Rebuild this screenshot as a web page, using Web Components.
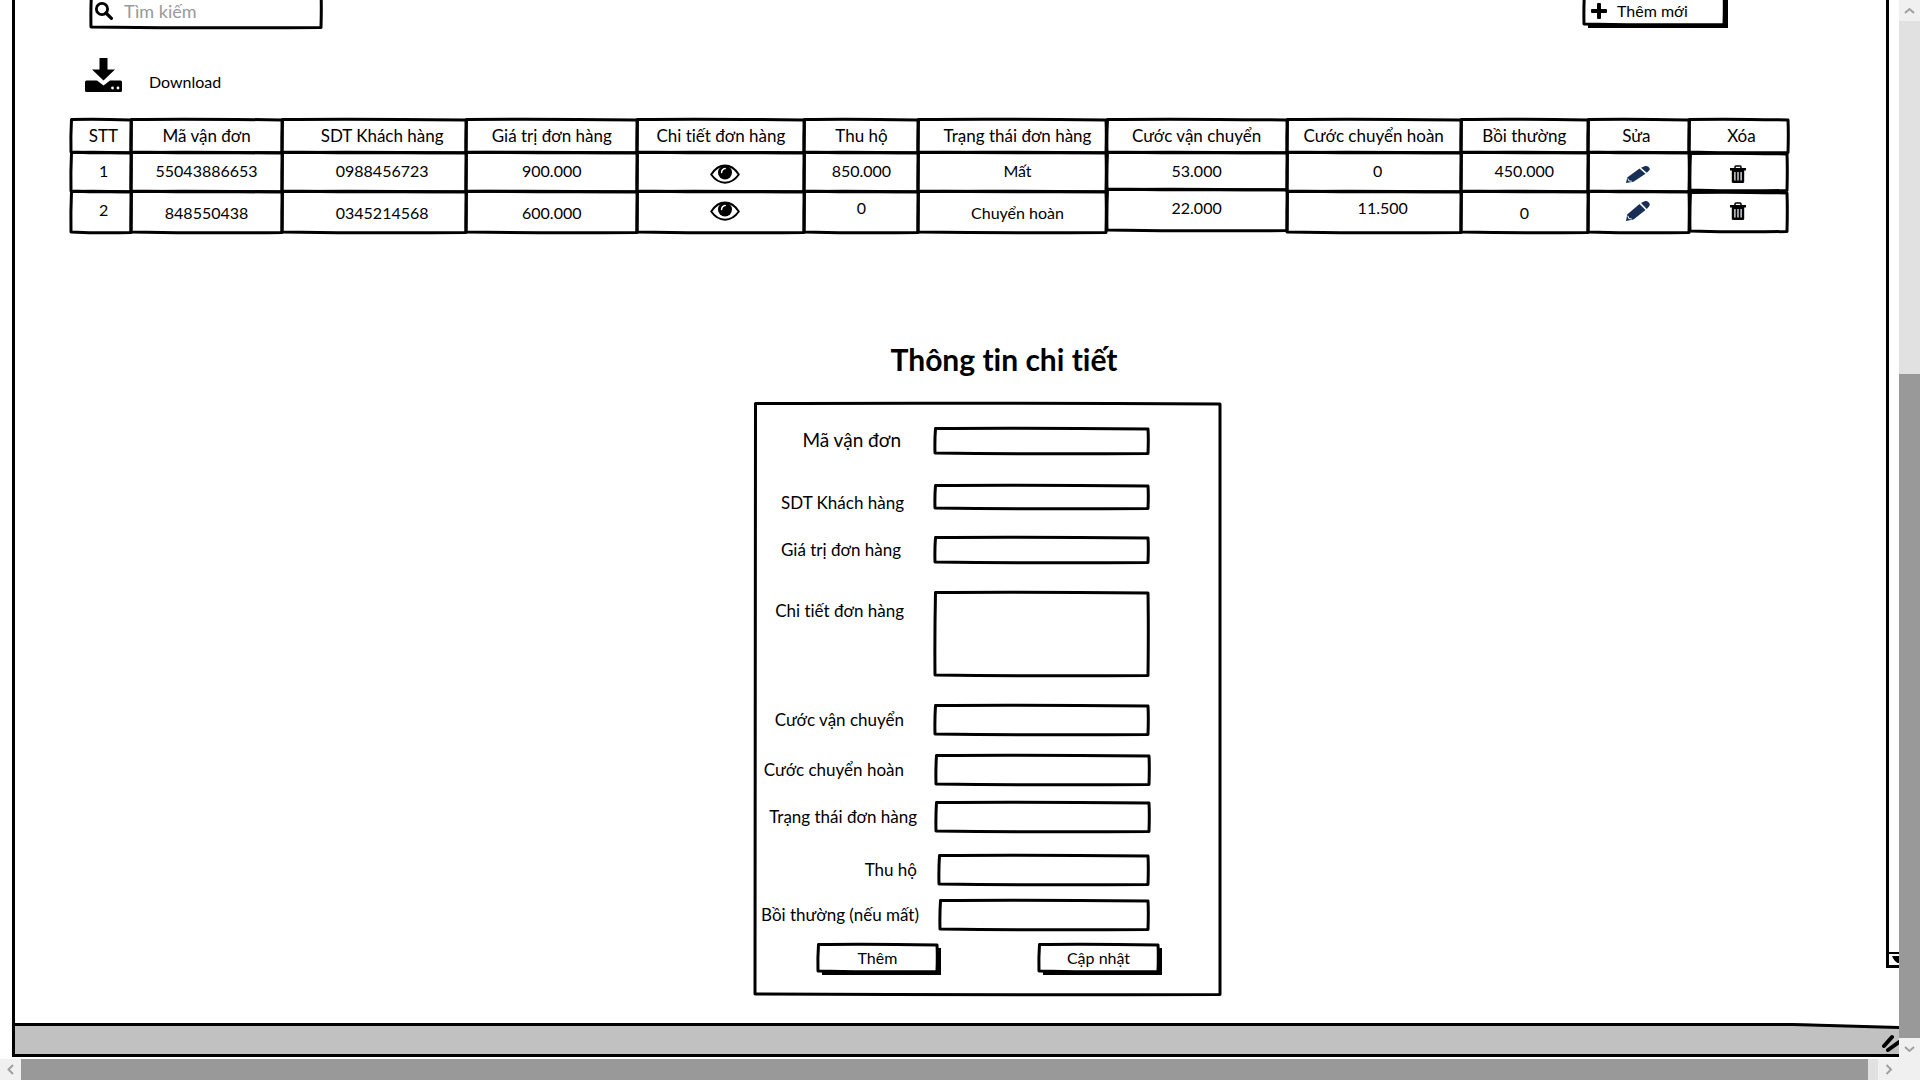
<!DOCTYPE html>
<html lang="vi">
<head>
<meta charset="utf-8">
<title>Quản lý vận đơn</title>
<style>
  html, body { margin: 0; height: 100%; overflow: hidden; background: #fff; }
  body { font-family: Lato, "Noto Sans", sans-serif; font-size: 16px; line-height: 20px; font-variant-ligatures: none; color: #000; }
</style>
</head>
<body>
<order-app></order-app>

<script>
/* Hand-drawn outline that fills its positioned parent. */
customElements.define('sketch-frame', class extends HTMLElement {
  constructor() {
    super();
    this.attachShadow({ mode: 'open' }).innerHTML = `
      <style>
        :host { position: absolute; inset: 0; display: block; pointer-events: none; }
        svg { display: block; width: 100%; height: 100%; overflow: visible; }
        path { fill: none; stroke: #000; stroke-width: 3; stroke-linejoin: round; stroke-linecap: round; }
      </style>
      <svg aria-hidden="true"><path/></svg>`;
  }
  connectedCallback() {
    this.observer = new ResizeObserver(() => this.draw());
    this.observer.observe(this);
    this.draw();
  }
  disconnectedCallback() { this.observer.disconnect(); }
  draw() {
    const w = this.clientWidth, h = this.clientHeight;
    this.shadowRoot.querySelector('path').setAttribute('d',
      `M.5 .5 Q${w * .4} -.4 ${w} 1 Q${w + .6} ${h * .4} ${w} ${h + .5}` +
      ` Q${w * .5} ${h + 1.4} 0 ${h} Q-.4 ${h * .5} .5 .5Z`);
  }
});

const ICONS = {
  search: ['0 0 18 18', '<circle cx="7" cy="7" r="5.6" fill="none" stroke="currentColor" stroke-width="2.8"/><path d="M11 11l5.4 5.4" stroke="currentColor" stroke-width="3.2" stroke-linecap="round"/>'],
  plus: ['0 0 16 16', '<path d="M6 1q0-1 1-1h2q1 0 1 1v5h5q1 0 1 1v2q0 1-1 1h-5v5q0 1-1 1H7q-1 0-1-1v-5H1q-1 0-1-1V7q0-1 1-1h5z" fill="currentColor"/>'],
  download: ['0 0 37 34', '<path d="M14.500 0h8v11.500h7.500L18.500 22.500 7 11.500h7.500z" fill="currentColor"/><path d="M1.500 22.500h10.500l6.500 5 6.500-5h10.500q1.500 0 1.500 1.500v8.500q0 1.500-1.500 1.500h-34Q0 34 0 32.500V24q0-1.500 1.500-1.500z" fill="currentColor"/><circle cx="27.500" cy="30" r="1.400" fill="#fff"/><circle cx="33" cy="30" r="1.400" fill="#fff"/>'],
  eye: ['0 0 30 20', '<path d="M1.200 10.500Q7 1.500 15 1.500t13.800 9Q23 18.700 15 18.700T1.200 10.500z" fill="#fff" stroke="currentColor" stroke-width="2" stroke-linejoin="round"/><circle cx="15" cy="8.500" r="7" fill="currentColor"/><path d="M11.600 8.500q.2-3.500 3.600-4" fill="none" stroke="#fff" stroke-width="1.500" stroke-linecap="round"/>'],
  pencil: ['0 0 24 20', '<path d="M0 20l1.200-6.500L13.500 3l6 6L7.500 18.500z" fill="#172f55"/><path d="M15 2l3.500-1.800q2-.6 3.500.5l1.200 1.300q1.200 1.600-.1 3.300l-2.300 2.700z" fill="#172f55"/><path d="M1.800 14.800l1 2.700 3 .5" fill="none" stroke="#fff" stroke-width="1"/>'],
  trash: ['0 0 16 18', '<path d="M5 3.500V2q0-1 1-1h4q1 0 1 1v1.500" fill="none" stroke="currentColor" stroke-width="1.500"/><path d="M0 3h16v2.500H0z" fill="currentColor"/><path d="M1.800 5h12.400v11.500q0 1.500-1.500 1.500H3.300q-1.500 0-1.500-1.500z" fill="currentColor"/><path d="M4.900 7v8.500M8 7v8.500M11.100 7v8.500" stroke="#e8eef5" stroke-width="1.300"/>'],
};

/* <ui-icon name="..."> sized by --w and --h */
customElements.define('ui-icon', class extends HTMLElement {
  connectedCallback() {
    const [box, art] = ICONS[this.getAttribute('name')];
    const [, , w, h] = box.split(' ');
    if (!this.shadowRoot) this.attachShadow({ mode: 'open' });
    this.shadowRoot.innerHTML = `
      <style>:host { display: block; flex: none; width: var(--w, ${w}px); height: var(--h, ${h}px); } svg { display: block; width: 100%; height: 100%; }</style>
      <svg viewBox="${box}" preserveAspectRatio="none" aria-hidden="true">${art}</svg>`;
  }
});

/* Raised button with a thick drop edge */
customElements.define('sketch-button', class extends HTMLElement {
  constructor() {
    super();
    this.attachShadow({ mode: 'open' }).innerHTML = `
      <style>
        :host { display: block; width: 119px; height: 27px; }
        button { position: relative; display: flex; align-items: center; justify-content: var(--justify, center); gap: 10px;
          width: 100%; height: 100%; padding: var(--pad, 0); border: 0; background: #fff; box-shadow: 4px 4px 0 #000;
          font: inherit; font-variant-ligatures: none; color: inherit; }
      </style>
      <button type="button"><sketch-frame></sketch-frame><slot></slot></button>`;
  }
});

customElements.define('search-box', class extends HTMLElement {
  constructor() {
    super();
    this.attachShadow({ mode: 'open' }).innerHTML = `
      <style>
        :host { position: relative; display: flex; align-items: center; gap: 11px; width: 230px; height: 100%; padding: 2px 4px 0; box-sizing: border-box; }
        input { flex: 1; min-width: 0; padding: 0; border: 0; background: none; outline: 0; font: inherit; font-size: 18px; line-height: 24px; }
        input::placeholder { color: #999; opacity: 1; }
      </style>
      <sketch-frame></sketch-frame>
      <ui-icon name="search"></ui-icon>
      <input type="search" placeholder="Tìm kiếm" aria-label="Tìm kiếm">`;
  }
});

customElements.define('order-table', class extends HTMLElement {
  constructor() {
    super();
    const cols = [60, 151, 184, 171, 167, 114, 188, 180, 174, 127, 101, 99];
    const heads = ['STT', 'Mã vận đơn', 'SDT Khách hàng', 'Giá trị đơn hàng', 'Chi tiết đơn hàng', 'Thu hộ',
      'Trạng thái đơn hàng', 'Cước vận chuyển', 'Cước chuyển hoàn', 'Bồi thường', 'Sửa', 'Xóa'];
    const rows = [
      ['1', '55043886653', '0988456723', '900.000', '@eye', '850.000', 'Mất', '53.000', '0', '450.000', '@pencil', '@trash'],
      ['2', '848550438', '0345214568', '600.000', '@eye', '0', 'Chuyển hoàn', '22.000', '11.500', '0', '@pencil', '@trash'],
    ];
    const labels = { eye: 'Xem chi tiết', pencil: 'Sửa', trash: 'Xóa' };
    const high = [5, 7, 8];
    const cell = (v, r, c) => {
      const body = v[0] === '@'
        ? `<button type="button" aria-label="${labels[v.slice(1)]}"><ui-icon name="${v.slice(1)}"></ui-icon></button>` : v;
      const cls = ['c' + c, v[0] === '@' ? 'icon' : (r === 1 && c > 0 ? (high.includes(c) ? 'high' : 'low') : '')].join(' ');
      return `<td class="${cls}"><sketch-frame></sketch-frame>${body}</td>`;
    };
    this.attachShadow({ mode: 'open' }).innerHTML = `
      <style>
        :host { display: block; }
        table { width: 100%; table-layout: fixed; border-collapse: separate; border-spacing: 0; }
        th, td { position: relative; box-sizing: border-box; padding: 0; font-weight: 400; text-align: center; vertical-align: top; white-space: nowrap; }
        th { height: 33px; padding-top: 7px; font-size: 17px; }
        td { padding-top: 9px; }
        .first td { height: 39px; }
        .second td { height: 41px; }
        td.high { padding-top: 7px; }
        td.low { padding-top: 12px; }
        td.icon { padding-top: 12px; }
        .second td.icon { padding-top: 10px; }
        .c0 { padding-left: 5px; }
        .c2 { padding-left: 16px; }
        .c6 { padding-left: 10px; }
        td.c4, td.c8 { padding-left: 8px; }
        .second td.c8 { padding-left: 18px; }
        th.c10 { padding-right: 4px; }
        th.c11 { padding-left: 6px; }
        td.c7 sketch-frame { top: -2px; bottom: 2px; }
        .first td.c7 sketch-frame { top: 0; }
        td.c11 sketch-frame { inset: 1px; }
        button { display: flex; align-items: center; justify-content: center; width: 32px; height: 20px; margin: 0 auto; padding: 0; border: 0; background: none; color: inherit; }
        .first .c10 { --h: 17px; }
      </style>
      <table>
        <colgroup>${cols.map(w => `<col style="width:${w}px">`).join('')}</colgroup>
        <thead><tr>${heads.map((h, i) => `<th scope="col" class="c${i}"><sketch-frame></sketch-frame>${h}</th>`).join('')}</tr></thead>
        <tbody>${rows.map((row, r) => `<tr class="${r ? 'second' : 'first'}">${row.map((v, c) => cell(v, r, c)).join('')}</tr>`).join('')}</tbody>
      </table>`;
  }
});

/* Labelled text box; attribute "multiline" gives a text area */
customElements.define('form-field', class extends HTMLElement {
  connectedCallback() {
    const multi = this.hasAttribute('multiline');
    if (!this.shadowRoot) this.attachShadow({ mode: 'open' });
    this.shadowRoot.innerHTML = `
      <style>
        :host { display: flex; align-items: center; height: var(--row, 29px); margin-bottom: var(--after, 20px); }
        label { flex: none; box-sizing: border-box; width: 180px; padding-right: var(--gap, 31px); text-align: right; white-space: nowrap; font-size: 17px; }
        :host([large]) label { padding-bottom: 2px; font-size: 19px; line-height: 24px; }
        :host([drop]) label { padding-top: 12px; }
        :host([multiline]) label { align-self: flex-start; padding-top: 9px; }
        .box { position: relative; flex: 1; height: 100%; margin-left: var(--in, 0px); margin-right: var(--out, 0px); }
        input, textarea { display: block; box-sizing: border-box; width: 100%; height: 100%; padding: 2px 6px; border: 0; outline: 0; background: none; resize: none; font: inherit; }
      </style>
      <label for="f">${this.getAttribute('label')}</label>
      <div class="box"><sketch-frame></sketch-frame>${multi ? '<textarea id="f"></textarea>' : '<input id="f" type="text">'}</div>`;
  }
});

customElements.define('detail-form', class extends HTMLElement {
  constructor() {
    super();
    this.attachShadow({ mode: 'open' }).innerHTML = `
      <style>
        :host { display: block; width: 465px; }
        h2 { margin: 0; padding-left: 33px; text-align: center; font-size: 30px; line-height: 40px; font-weight: 700; }
        form { position: relative; box-sizing: border-box; margin-top: 24px; padding: 25px 72px 23px 0; }
        .actions { display: flex; justify-content: space-between; margin: 0 -10px 0 63px; }
      </style>
      <h2>Thông tin chi tiết</h2>
      <form>
        <sketch-frame></sketch-frame>
        <form-field large label="Mã vận đơn" style="--row:25px;--after:32px;--gap:34px"></form-field>
        <form-field drop label="SDT Khách hàng" style="--row:23px;--after:29px"></form-field>
        <form-field label="Giá trị đơn hàng" style="--row:25px;--after:30px;--gap:34px"></form-field>
        <form-field multiline label="Chi tiết đơn hàng" style="--row:83px;--after:30px"></form-field>
        <form-field label="Cước vận chuyển" style="--after:21px"></form-field>
        <form-field label="Cước chuyển hoàn" style="--after:18px;--in:1px;--out:-1px"></form-field>
        <form-field label="Trạng thái đơn hàng" style="--after:24px;--gap:18px;--in:1px;--out:-1px"></form-field>
        <form-field label="Thu hộ" style="--after:16px;--gap:18px;--in:4px"></form-field>
        <form-field label="Bồi thường (nếu mất)" style="--after:15px;--gap:16px;--in:5px"></form-field>
        <div class="actions"><sketch-button>Thêm</sketch-button><sketch-button>Cập nhật</sketch-button></div>
      </form>`;
  }
});

customElements.define('scroll-bar', class extends HTMLElement {
  connectedCallback() {
    const v = this.hasAttribute('vertical');
    const arrow = d => `<svg viewBox="0 0 21 21" width="21" height="21" aria-hidden="true"><path d="${d}" fill="none" stroke="#a0a0a0" stroke-width="2"/></svg>`;
    if (!this.shadowRoot) this.attachShadow({ mode: 'open' });
    this.shadowRoot.innerHTML = `
      <style>
        :host { display: flex; flex-direction: ${v ? 'column' : 'row'}; background: #e1e1e1; }
        svg { display: block; flex: none; background: #f0f0f0; }
        .lead { flex: var(--lead, 0) 0 0; }
        .thumb { flex: var(--thumb, 1) 0 0; background: #999; }
        .tail { flex: var(--tail, 0) 0 0; }
      </style>
      ${arrow(v ? 'M6 13l4.500-4 4.500 4' : 'M13 6L8.500 10.500l4.500 4.500')}
      <div class="lead"></div><div class="thumb"></div><div class="tail"></div>
      ${arrow(v ? 'M6 9l4.500 4 4.500-4' : 'M8.500 6l4.500 4.500-4.500 4.500')}`;
  }
});

customElements.define('order-app', class extends HTMLElement {
  constructor() {
    super();
    this.attachShadow({ mode: 'open' }).innerHTML = `
      <style>
        :host { display: grid; grid-template: minmax(0, 1fr) 21px / minmax(0, 1fr) 21px; height: 100%; }
        .view { display: flex; overflow: hidden; padding: 0 0 2px 12px; }
        .window { flex: 1; min-width: 0; display: flex; flex-direction: column; border-left: 3px solid #000; }
        .content { flex: 1; min-height: 0; display: flex; }
        main { flex: 1; min-width: 0; }
        .tools { display: flex; justify-content: space-between; height: 35px; margin: -8px 162px 0 76px; }
        .tools sketch-button { width: 140px; height: 32px; --justify: flex-start; --pad: 6px 0 0 7px; }
        .download { display: flex; align-items: flex-end; gap: 27px; width: max-content; margin: 31px 0 27px 70px; padding: 0; border: 0; background: none; font: inherit; color: inherit; }
        order-table { margin: 0 98px 0 56px; }
        detail-form { margin: 107px auto 0; }
        .detail { padding-left: 74px; }
        .track { flex: none; width: 10px; height: 965px; border: solid #000; border-width: 0 0 3px 3px; display: flex; flex-direction: column; justify-content: flex-end; }
        .track svg { display: block; border-top: 2px solid #000; }
        .status { position: relative; height: 34px; background: #c1c1c1; flex: none; }
        .status svg { display: block; width: 100%; height: 100%; overflow: visible; }
        .status .grip { position: absolute; right: 0; top: 0; width: 106px; height: 34px; overflow: hidden; }
        .corner { background: #f0f0f0; }
        .vbar { --lead: 353; --thumb: 664; }
        .hbar { --thumb: 1847; --tail: 10; }
      </style>
      <div class="view">
        <div class="window">
          <div class="content">
            <main>
              <div class="tools">
                <search-box></search-box>
                <sketch-button><ui-icon name="plus"></ui-icon>Thêm mới</sketch-button>
              </div>
              <button class="download" type="button"><ui-icon name="download"></ui-icon><span>Download</span></button>
              <order-table></order-table>
              <div class="detail"><detail-form></detail-form></div>
            </main>
            <div class="track">
              <svg width="10" height="11" viewBox="0 0 10 11" aria-hidden="true"><path d="M3 2h7v7H8.500Q5 7 3 2z"/></svg>
            </div>
          </div>
          <div class="status">
            <svg viewBox="0 0 1884 34" preserveAspectRatio="none" aria-hidden="true">
              <path d="M1778 0H1884V4z" fill="#fff"/>
              <path d="M0 1.500H1778L1884 4.500M0 32.500H1884" fill="none" stroke="#000" stroke-width="3"/>
            </svg>
            <svg class="grip" viewBox="0 0 106 34" aria-hidden="true">
              <path d="M91 23L99 14M95 27L106 19" stroke="#000" stroke-width="4" stroke-linecap="round"/>
            </svg>
          </div>
        </div>
      </div>
      <scroll-bar class="vbar" vertical></scroll-bar>
      <scroll-bar class="hbar"></scroll-bar>
      <div class="corner"></div>`;
  }
});
</script>
</body>
</html>
